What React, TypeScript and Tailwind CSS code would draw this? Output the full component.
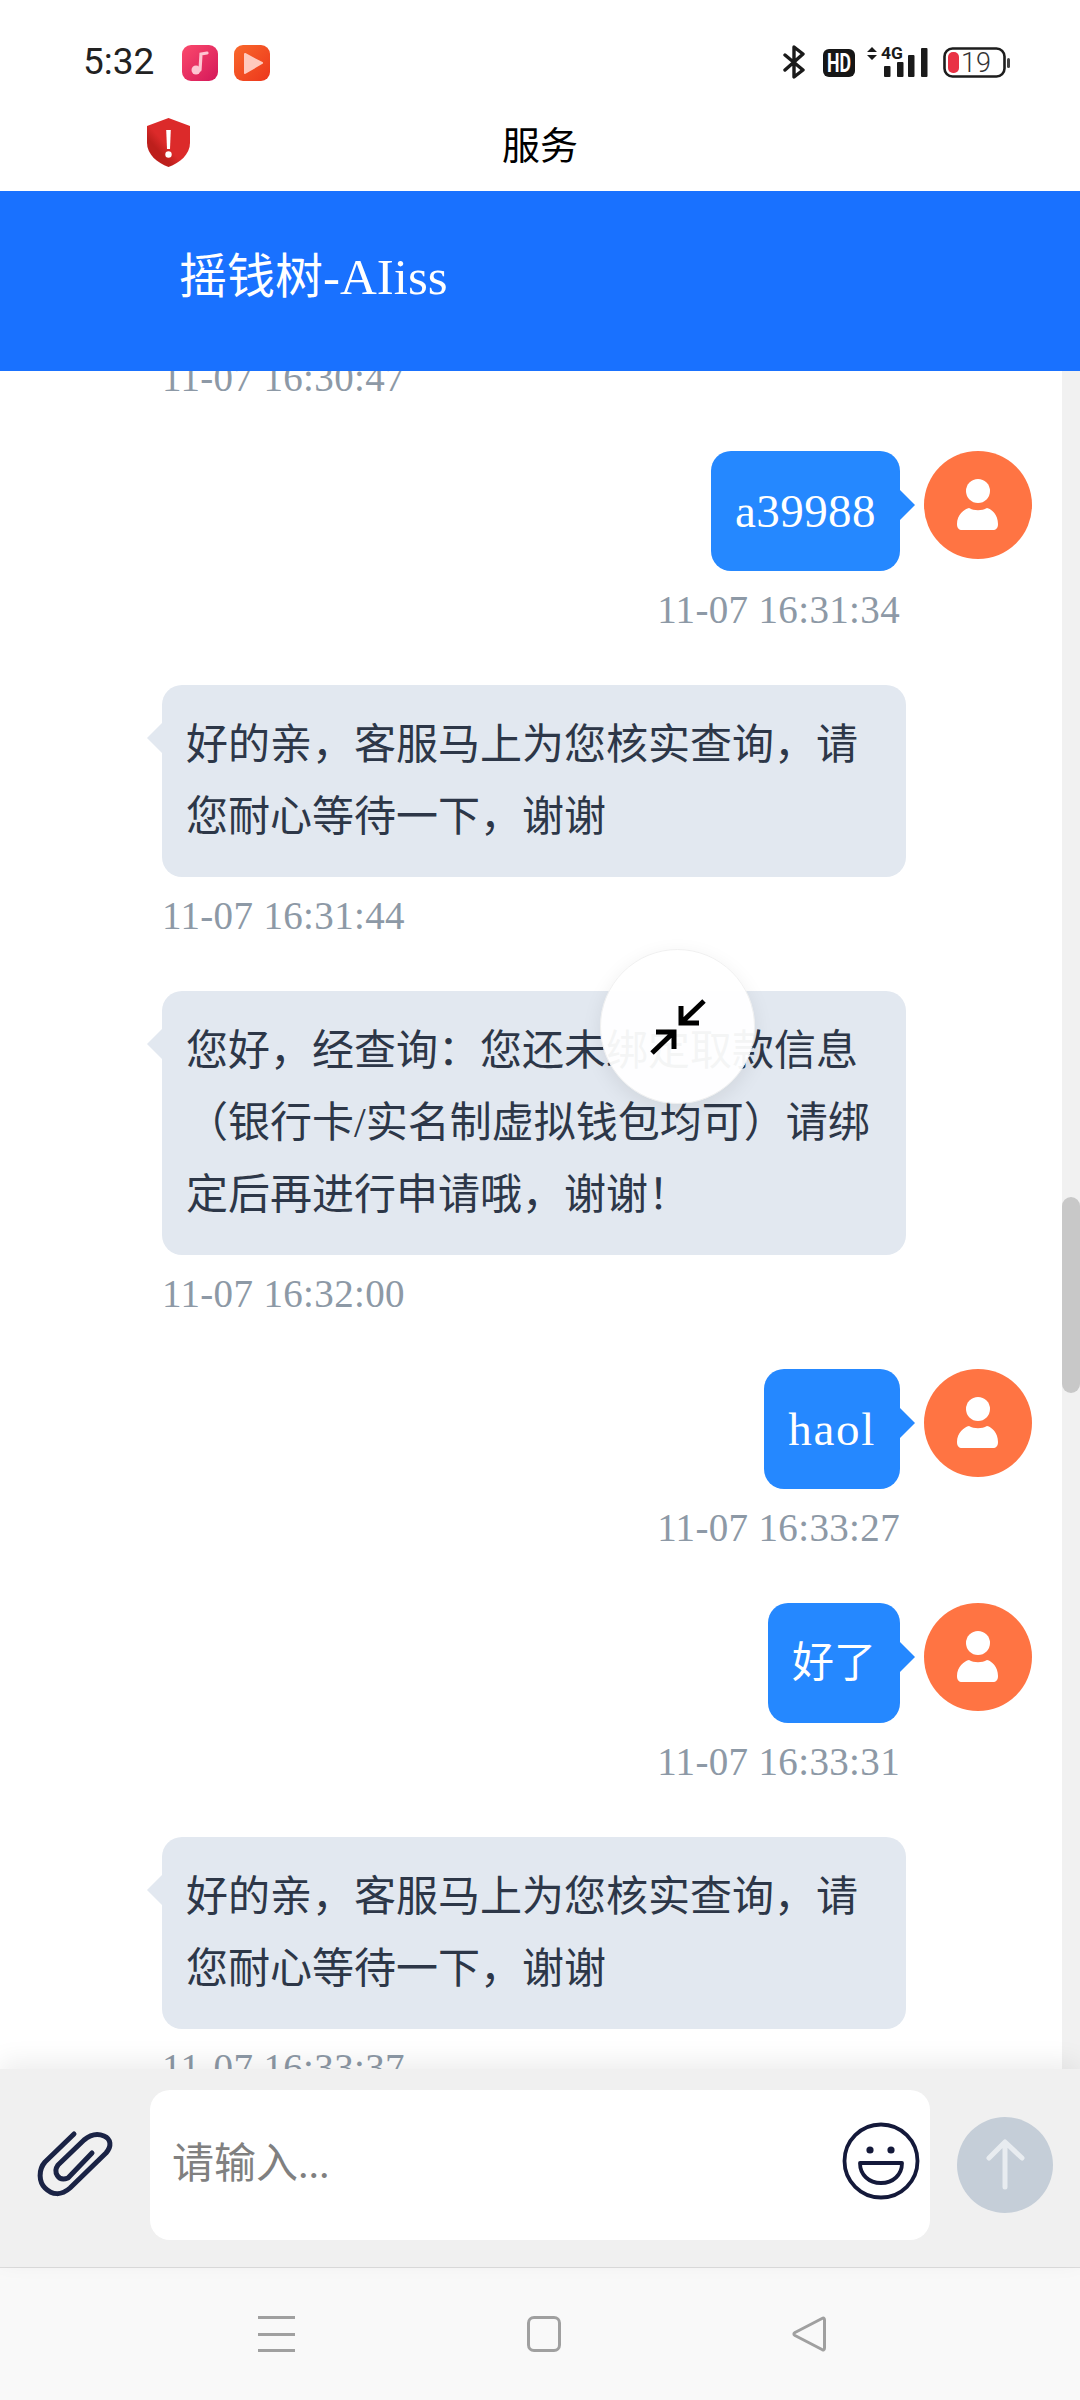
import React from "react";

const serif = "font-['Liberation_Serif','Noto_Sans_CJK_SC',serif]";

function Avatar() {
  return (
    <div className="w-[108px] h-[108px] rounded-full bg-[#ff7443] shrink-0">
      <svg width="108" height="108" viewBox="0 0 108 108" fill="#fff">
        <circle cx="54" cy="40" r="12" />
        <path d="M33 73C33 64 40 58 45 57C50 60 58 60 63 57C68 58 74 64 74 73C74 77 72 79 69 79H38C35 79 33 77 33 73Z" />
      </svg>
    </div>
  );
}

function Time({ t, right }: { t: string; right?: boolean }) {
  return (
    <div className={`h-[54px] leading-[54px] mt-[12px] mb-[48px] text-[39px] tracking-[0.35px] text-[#8d99a6] ${right ? "text-right mr-[132px]" : ""}`}>{t}</div>
  );
}

function Mine({ text, time, textClass }: { text: string; time: string; textClass: string }) {
  return (
    <div>
      <div className="flex justify-end gap-[24px]">
        <div className="relative h-[120px] rounded-[20px] bg-[#2588ff] text-white px-[24px] py-[24px] leading-[72px]">
          <span className={textClass}>{text}</span>
          <div className="absolute left-full top-[39px] w-0 h-0 border-y-[15px] border-y-transparent border-l-[15px] border-l-[#2588ff]" />
        </div>
        <Avatar />
      </div>
      <Time t={time} right />
    </div>
  );
}

function Theirs({ text, time }: { text: string; time: string }) {
  return (
    <div className="pl-[162px]">
      <div className="relative w-[744px] rounded-[20px] bg-[#e2e8f0] text-[#2d3748] text-[42px] leading-[72px] px-[24px] py-[24px]">
        {text}
        <div className="absolute right-full top-[38px] w-0 h-0 border-y-[15px] border-y-transparent border-r-[15px] border-r-[#e2e8f0]" />
      </div>
      <Time t={time} />
    </div>
  );
}

function StatusBar() {
  return (
    <div className="h-[98px] pt-[26px] flex items-start">
      <div className="ml-[83px] w-[99px] h-[72px] leading-[72px] text-[37px] text-[#222] font-['Roboto',sans-serif]">5:32</div>
      <svg className="mt-[19px]" width="36" height="36" viewBox="0 0 36 36">
        <defs>
          <linearGradient id="m" x1="0" y1="0" x2="1" y2="1">
            <stop offset="0" stopColor="#fb4a6c" />
            <stop offset="1" stopColor="#d4175a" />
          </linearGradient>
        </defs>
        <rect width="36" height="36" rx="9" fill="url(#m)" />
        <circle cx="14" cy="25" r="4.5" fill="#fdc5d2" />
        <path d="M18 25L19 9L25 8" stroke="#fdc5d2" strokeWidth="3.2" fill="none" strokeLinecap="round" />
      </svg>
      <svg className="ml-[16px] mt-[19px]" width="36" height="36" viewBox="0 0 36 36">
        <defs>
          <linearGradient id="p" x1="0" y1="0" x2="1" y2="1">
            <stop offset="0" stopColor="#f9682b" />
            <stop offset="1" stopColor="#ec361c" />
          </linearGradient>
        </defs>
        <rect width="36" height="36" rx="9" fill="url(#p)" />
        <path d="M11 9L28 18L11 28Z" fill="#ffc9bd" stroke="#ffc9bd" strokeWidth="2" strokeLinejoin="round" />
      </svg>
      <svg className="ml-[513px] mt-[19px]" width="22" height="34" viewBox="0 0 22 34" fill="none" stroke="#1a1a1a" strokeWidth="3.4" strokeLinejoin="round" strokeLinecap="round">
        <path d="M2 10L20 25L11 32V2L20 9L2 25" />
      </svg>
      <svg className="ml-[18px] mt-[23px]" width="32" height="28" viewBox="0 0 32 28">
        <rect width="32" height="28" rx="6" fill="#161616" />
        <text x="4" y="23" textLength="24" lengthAdjust="spacingAndGlyphs" fontFamily="Roboto, sans-serif" fontWeight="700" fontSize="26" fill="#fff">HD</text>
      </svg>
      <svg className="ml-[12px] mt-[19px]" width="61" height="33" viewBox="0 0 61 33" fill="#1a1a1a">
        <path d="M5 6L10 1L15 6ZM5 9L15 9L10 14Z" transform="translate(-5 1)" />
        <text x="14" y="13.5" textLength="22" lengthAdjust="spacingAndGlyphs" fontFamily="Roboto, sans-serif" fontWeight="700" fontSize="17">4G</text>
        <rect x="17" y="21" width="6.5" height="11" rx="1" />
        <rect x="30" y="17" width="6.5" height="15" rx="1" />
        <rect x="41" y="10" width="6.5" height="22" rx="1" />
        <rect x="54" y="3" width="6.5" height="29" rx="1" />
      </svg>
      <svg className="ml-[15px] mt-[21px]" width="67" height="32" viewBox="0 0 67 32">
        <rect x="1.5" y="1.5" width="60" height="28" rx="8" fill="none" stroke="#1d1d1d" strokeWidth="2.6" />
        <rect x="5" y="5" width="11" height="21" rx="5" fill="#e93245" />
        <text x="18" y="25" fontFamily="Roboto, sans-serif" fontWeight="300" fontSize="27" fill="#333">19</text>
        <rect x="64" y="11" width="3" height="10" rx="1.5" fill="#444" />
      </svg>
    </div>
  );
}

export default function App() {
  return (
    <div className={`relative w-[1080px] h-[2400px] flex flex-col bg-white overflow-hidden ${serif}`}>
      <StatusBar />
      <div className="relative h-[93px] flex items-center justify-center pb-[5px] text-[38px] text-black font-['Noto_Sans_CJK_SC',sans-serif]">
        <svg className="absolute left-[146px] top-[20px]" width="45" height="49" viewBox="0 0 45 49">
          <defs>
            <linearGradient id="s" x1="0" y1="1" x2="1" y2="0">
              <stop offset="0.3" stopColor="#bd1f1c" />
              <stop offset="0.45" stopColor="#dc2a2a" />
            </linearGradient>
          </defs>
          <path d="M22.5 0L44 8V25C44 36 34 45 22.5 49C11 45 1 36 1 25V8Z" fill="url(#s)" />
          <path d="M20.2 12H24.8L24 31H21Z" fill="#fff" />
          <circle cx="22.5" cy="36.5" r="3.2" fill="#fff" />
        </svg>
        服务
      </div>
      <div className="relative z-10 h-[180px] bg-[#1971ff] text-white flex items-center pl-[179px] pb-[8px] shrink-0">
        <span className="text-[48px]">摇钱树</span>
        <span className="text-[51px]">-AIiss</span>
      </div>
      <div className="flex flex-1 min-h-0">
        <div className="flex-1 overflow-hidden pr-[30px]">
          <div className="-mt-[32px] pl-[162px]">
            <Time t="11-07 16:30:47" />
          </div>
          <div className="-mt-[2px]">
            <Mine text="a39988" time="11-07 16:31:34" textClass="text-[47px] tracking-[0.45px]" />
            <Theirs text="好的亲，客服马上为您核实查询，请您耐心等待一下，谢谢" time="11-07 16:31:44" />
            <Theirs text="您好，经查询：您还未绑定取款信息（银行卡/实名制虚拟钱包均可）请绑定后再进行申请哦，谢谢！" time="11-07 16:32:00" />
            <Mine text="haol" time="11-07 16:33:27" textClass="text-[47px] tracking-[1.7px]" />
            <Mine text="好了" time="11-07 16:33:31" textClass="text-[42px]" />
            <Theirs text="好的亲，客服马上为您核实查询，请您耐心等待一下，谢谢" time="11-07 16:33:37" />
          </div>
        </div>
        <div className="w-[18px] bg-[#f1f1f1] pt-[826px] shrink-0">
          <div className="h-[196px] rounded-full bg-[#c8c8c8]" />
        </div>
      </div>
      <div className="relative z-10 h-[198px] shrink-0 bg-[#f0f0f0] flex items-start pt-[21px] shadow-[0_-8px_24px_rgba(0,0,0,0.07)]">
        <svg className="ml-[20px] mt-[20px]" width="110" height="110" viewBox="0 0 110 110" fill="none" stroke="#1a2345" strokeWidth="5" strokeLinecap="round" strokeLinejoin="round">
          <path d="M54 24L25 52C18 60 19 72 25 78C32 85 41 86 50 78L86 43C92 36 91 29 84 26C77 23 70 25 64 30L38 55C33 62 38 72 48 68L72 43" />
        </svg>
        <div className="ml-[20px] w-[780px] h-[150px] rounded-[20px] bg-white flex items-center justify-between pl-[22px] pr-[10px]">
          <div className="text-[42px] text-[#808080] -mt-[2px]">请输入...</div>
          <svg className="-mt-[8px]" width="78" height="78" viewBox="13 17 78 78" fill="none" stroke="#14193a" strokeWidth="3.8" strokeLinejoin="round">
            <circle cx="52" cy="56" r="36.5" />
            <path d="M31 58H73C73 70 64 78 52 78C40 78 31 70 31 58Z" />
            <circle cx="41" cy="45" r="3.6" fill="#14193a" stroke="none" />
            <circle cx="62" cy="45" r="3.6" fill="#14193a" stroke="none" />
          </svg>
        </div>
        <div className="ml-[27px] mt-[27px] w-[96px] h-[96px] rounded-full bg-[#c5ced8]">
          <svg width="96" height="96" viewBox="0 0 96 96" fill="none" stroke="#e8ecf0" strokeWidth="5" strokeLinecap="round" strokeLinejoin="round">
            <path d="M48 26V70M32 41L48 25L65 41" />
          </svg>
        </div>
      </div>
      <div className="h-[133px] shrink-0 bg-[#f9f9f9] border-t border-[#dcdcdc] flex items-center pl-[258px]">
        <div className="w-[37px] h-[36px] flex flex-col justify-between">
          <div className="h-[3px] bg-[#a0a0a0]" />
          <div className="h-[3px] bg-[#a0a0a0]" />
          <div className="h-[3px] bg-[#a0a0a0]" />
        </div>
        <div className="ml-[232px] w-[34px] h-[36px] rounded-[7px] border-[3px] border-[#a0a0a0]" />
        <svg className="ml-[231px]" width="34" height="36" viewBox="0 0 34 36" fill="none" stroke="#a0a0a0" strokeWidth="3" strokeLinejoin="round">
          <path d="M30 2.5C32 1.5 32.5 2.5 32.5 4V32C32.5 34 31 34.5 30 33.5L3 19.5C1.5 18.5 1.5 17.5 3 16.5Z" />
        </svg>
      </div>
      <div className="absolute z-20 left-[600px] top-[949px] w-[155px] h-[155px] rounded-full bg-white/95 border border-[#f0f0f0] shadow-[0_6px_20px_rgba(0,0,0,0.08)]">
        <svg width="155" height="155" viewBox="602 950 155 155" fill="none" stroke="#000" strokeWidth="5">
          <path d="M653 1053L675 1032M657 1032H675V1049" />
          <path d="M705 1001L682 1023M682 1006V1023H700" />
        </svg>
      </div>
    </div>
  );
}
